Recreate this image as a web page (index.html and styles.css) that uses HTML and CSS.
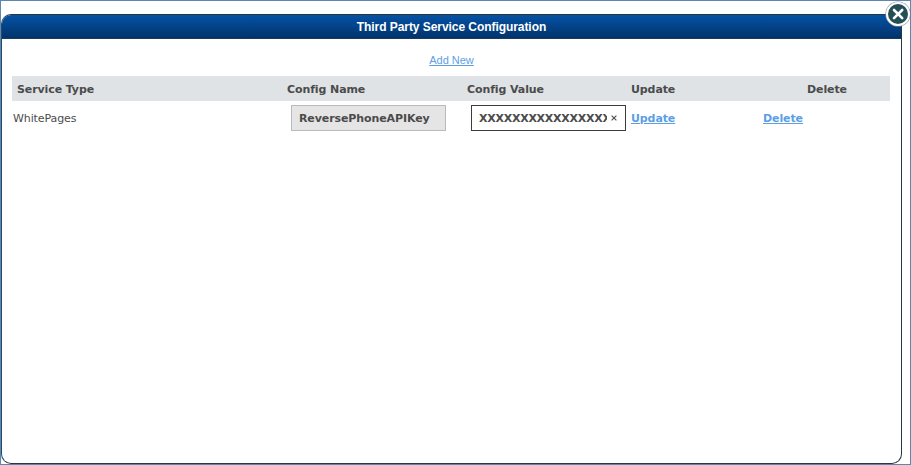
FILE: index.html
```html
<!DOCTYPE html>
<html lang="en">
<head>
<meta charset="utf-8">
<title>Third Party Service Configuration</title>
<link rel="stylesheet" href="styles.css">
</head>
<body>
<main class="frame">
  <section class="dialog">
    <header class="titlebar"><h1>Third Party Service Configuration</h1></header>
    <div class="add"><a href="#">Add New</a></div>
    <div class="row head">
      <span>Service Type</span><span>Config Name</span><span>Config Value</span><span>Update</span><span>Delete</span>
    </div>
    <div class="row item">
      <span class="type">WhitePages</span>
      <div class="field readonly"><span>ReversePhoneAPIKey</span></div>
      <div class="field"><span class="value">XXXXXXXXXXXXXXXX</span><svg class="clear" viewBox="0 0 6 6"><path d="M.6.6 5.4 5.4M5.4.6.6 5.4"/></svg></div>
      <a href="#">Update</a>
      <a href="#">Delete</a>
    </div>
  </section>
  <svg class="close" viewBox="0 0 26 26"><circle class="shadow" cx="13" cy="13" r="12.6"/><circle class="ring" cx="13" cy="13" r="12"/><circle class="disc" cx="13" cy="13" r="10"/><path d="M9 9 17.2 17.2M17.2 9 9 17.2"/></svg>
</main>
</body>
</html>
```
FILE: styles.css
```css
* { box-sizing: border-box; }
body { margin: 0; background: #fff; color: #4b4b4b; font: 11px "DejaVu Sans", Verdana, sans-serif; letter-spacing: -.1px; }
.frame { position: relative; height: 465px; padding: 13px 8px 0 0; border: 1px solid #5e87b0; overflow: hidden; }
.dialog { height: 450px; border: 1px solid #263746; border-left-color: #24496b; border-radius: 10px; background: #fff; overflow: hidden; }
.titlebar { height: 24px; display: flex; align-items: center; justify-content: center; background: linear-gradient(#0452a5, #02336b); border-bottom: 1px solid #173c64; }
h1 { margin: 0; color: #fff; font: bold 12px/14px "Liberation Sans", Arial, sans-serif; letter-spacing: -.06px; }
.add { height: 37px; padding-top: 14px; text-align: center; font: 11px/14px "Liberation Sans", Arial, sans-serif; letter-spacing: 0; }
a { color: #5c9fe5; text-decoration: underline; }
.row { display: grid; align-items: center; margin: 0 11px 0 10px; }
.head { height: 25px; padding: 2px 0 0 5px; grid-template-columns: 270px 180px 164px 176px 1fr; background: #dfe3e6; font-weight: bold; }
.item { height: 34px; grid-template-columns: 278px 180px 160px 132px 1fr; padding-left: 1px; font-weight: bold; }
.type { font-weight: normal; }
.field { width: 155px; height: 26px; display: flex; align-items: center; padding: 0 7px; border: 1px solid #3c3c3c; background: #fff; }
.readonly { border-color: #bababa; background: #e5e5e5; }
.value { width: 128px; overflow: hidden; white-space: nowrap; letter-spacing: -.25px; }
.clear { width: 6px; height: 6px; margin-left: 4px; flex: none; fill: none; stroke: #555; stroke-width: 1.2; }
.close { position: absolute; left: 884px; top: 0; width: 26px; height: 26px; fill: none; stroke: #fff; stroke-width: 2.6; stroke-linecap: round; }
.shadow { fill: #999; stroke: none; }
.ring { fill: #fff; stroke: none; }
.disc { fill: #254e57; stroke: none; }
```
